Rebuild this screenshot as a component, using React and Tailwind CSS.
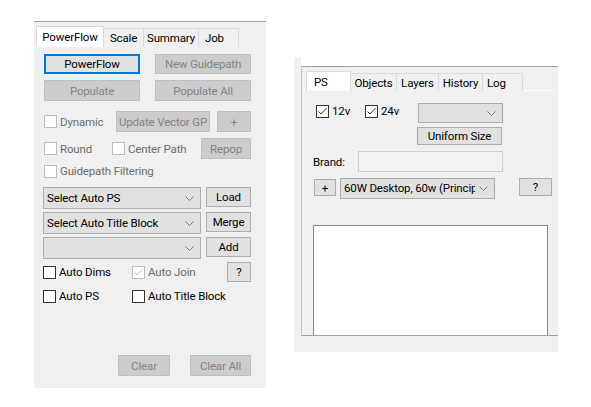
import React from "react";

function Btn({ children, className = "", disabled, primary }) {
  const look = disabled
    ? "bg-[#cccccc] border border-[#bfbfbf] text-[#838383]"
    : primary
    ? "bg-[#e1e1e1] border-2 border-[#0078d7] text-black"
    : "bg-[#e1e1e1] border border-[#adadad] text-black";
  return (
    <button className={`flex items-center justify-center shrink-0 text-[11.5px] tracking-[-0.15px] leading-[14px] whitespace-nowrap ${look} ${className}`}>
      {children}
    </button>
  );
}

function Check({ label, checked, disabled, className = "" }) {
  const edge = disabled ? "border-[#bcbcbc]" : "border-[#333333]";
  const stroke = disabled ? "#bcbcbc" : "#333333";
  return (
    <div className={`flex items-center shrink-0 ${className}`}>
      <div className={`w-[13px] h-[13px] border bg-white flex items-center justify-center ${edge}`}>
        {checked && (
          <svg width="11" height="11" viewBox="0 0 11 11">
            <polyline points="1.5,5.5 4,8 9.5,2" fill="none" stroke={stroke} strokeWidth="1" />
          </svg>
        )}
      </div>
      <span className={`ml-[3px] text-[11.5px] tracking-[-0.15px] leading-[14px] whitespace-nowrap ${disabled ? "text-[#6d6d6d]" : "text-black"}`}>{label}</span>
    </div>
  );
}

function Combo({ text, className = "" }) {
  return (
    <div className={`flex items-center shrink-0 bg-[#e1e1e1] border border-[#adadad] pl-[3px] pr-[6px] overflow-hidden ${className}`}>
      <span className="flex-1 min-w-0 text-[11.5px] tracking-[-0.15px] leading-[15px] text-black whitespace-nowrap overflow-hidden">{text}</span>
      <svg width="9" height="5" viewBox="0 0 9 5" className="shrink-0 ml-[4px]">
        <polyline points="0.5,0.5 4.5,4.5 8.5,0.5" fill="none" stroke="#7a7a7a" strokeWidth="1" />
      </svg>
    </div>
  );
}

function Tab({ label, active, className = "" }) {
  return active ? (
    <div className={`flex items-center justify-center bg-white border border-b-0 border-[#d9d9d9] text-[11.5px] tracking-[-0.15px] leading-[14px] text-black whitespace-nowrap ${className}`}>
      {label}
    </div>
  ) : (
    <div className={`flex items-center justify-center bg-[#f0f0f0] border-t border-r border-[#d9d9d9] text-[11.5px] tracking-[-0.15px] leading-[14px] text-black whitespace-nowrap ${className}`}>
      {label}
    </div>
  );
}

function LeftPanel() {
  return (
    <div className="w-[232px] h-[367px] bg-[#f0f0f0] border-t border-[#a0a0a0] flex flex-col shrink-0">
      <div className="flex items-end h-[25px] pl-[2px]">
        <Tab label="PowerFlow" active className="w-[68px] h-[21px]" />
        <Tab label="Scale" className="w-[40px] h-[19px]" />
        <Tab label="Summary" className="w-[55px] h-[19px]" />
        <Tab label="Job" className="w-[40px] h-[19px] justify-start pl-[6px]" />
      </div>

      <div className="flex mt-[7px] ml-[10px] gap-[15px]">
        <Btn primary className="w-[96px] h-[20px]">PowerFlow</Btn>
        <Btn disabled className="w-[96px] h-[20px]">New Guidepath</Btn>
      </div>
      <div className="flex mt-[6px] ml-[10px] gap-[15px]">
        <Btn disabled className="w-[96px] h-[21px]">Populate</Btn>
        <Btn disabled className="w-[96px] h-[21px]">Populate All</Btn>
      </div>

      <div className="flex items-center mt-[10px] ml-[10px] h-[21px]">
        <Check label="Dynamic" disabled className="w-[72px]" />
        <Btn disabled className="w-[94px] h-[21px]">Update Vector GP</Btn>
        <Btn disabled className="w-[34px] h-[21px] ml-[7px]">+</Btn>
      </div>
      <div className="flex items-center mt-[6px] ml-[10px] h-[21px]">
        <Check label="Round" disabled className="w-[68px]" />
        <Check label="Center Path" disabled className="w-[89px]" />
        <Btn disabled className="w-[50px] h-[21px]">Repop</Btn>
      </div>
      <div className="flex items-center mt-[2px] ml-[10px] h-[20px]">
        <Check label="Guidepath Filtering" disabled />
      </div>

      <div className="flex items-start mt-[6px] ml-[9px] gap-[5px]">
        <Combo text="Select Auto PS" className="w-[158px] h-[22px]" />
        <Btn className="w-[45px] h-[20px]">Load</Btn>
      </div>
      <div className="flex items-start mt-[3px] ml-[9px] gap-[5px]">
        <Combo text="Select Auto Title Block" className="w-[158px] h-[22px]" />
        <Btn className="w-[45px] h-[20px]">Merge</Btn>
      </div>
      <div className="flex items-start mt-[3px] ml-[9px] gap-[5px]">
        <Combo text="" className="w-[158px] h-[22px]" />
        <Btn className="w-[45px] h-[20px]">Add</Btn>
      </div>

      <div className="flex items-center mt-[3px] ml-[9px] h-[20px]">
        <Check label="Auto Dims" className="w-[89px]" />
        <Check label="Auto Join" checked disabled className="w-[95px]" />
        <Btn className="w-[24px] h-[20px]">?</Btn>
      </div>
      <div className="flex items-center mt-[4px] ml-[9px] h-[20px]">
        <Check label="Auto PS" className="w-[89px]" />
        <Check label="Auto Title Block" />
      </div>

      <div className="flex mt-[49px] ml-[84px] gap-[20px]">
        <Btn disabled className="w-[52px] h-[21px]">Clear</Btn>
        <Btn disabled className="w-[61px] h-[21px]">Clear All</Btn>
      </div>
    </div>
  );
}

function RightPanel() {
  return (
    <div className="w-[264px] flex flex-col shrink-0 mt-[36px] ml-[28px]">
      <div className="flex h-[279px]">
        <div className="w-[7px] bg-[#f0f0f0]" />
        <div className="w-[1px] bg-[#c4c4c4] mt-[9px]" />
        <div className="flex-1 flex flex-col">
          <div className="h-[9px] bg-white" />
          <div className="h-[270px] bg-[#f0f0f0] border-t border-b border-[#a0a0a0] overflow-hidden flex flex-col">
            <div className="flex items-end h-[25px] mt-[4px] ml-[4px] mr-[5px]">
              <Tab label="PS" active className="w-[45px] h-[20px] justify-start pl-[7px]" />
              <Tab label="Objects" className="w-[46px] h-[18px]" />
              <Tab label="Layers" className="w-[42px] h-[18px]" />
              <Tab label="History" className="w-[44px] h-[18px]" />
              <Tab label="Log" className="w-[40px] h-[18px] justify-start pl-[4px]" />
              <div className="flex-1 h-[1px] bg-white" />
            </div>

            <div className="flex items-start mt-[12px] ml-[14px]">
              <Check label="12v" checked className="w-[49px] mt-[1px]" />
              <Check label="24v" checked className="w-[53px] mt-[1px]" />
              <Combo text="" className="w-[85px] h-[20px]" />
            </div>
            <div className="flex mt-[4px] ml-[115px]">
              <Btn className="w-[85px] h-[18px]">Uniform Size</Btn>
            </div>
            <div className="flex items-center mt-[6px] ml-[11px]">
              <span className="w-[45px] text-[11.5px] tracking-[-0.15px] leading-[14px] text-black">Brand:</span>
              <div className="w-[145px] h-[21px] bg-[#f2f2f2] border border-[#cccccc]" />
            </div>
            <div className="flex items-start mt-[6px] ml-[12px]">
              <Btn className="w-[22px] h-[17px] mt-[1px]">+</Btn>
              <Combo text="60W Desktop, 60w (Principal)" className="w-[155px] h-[21px] ml-[4px]" />
              <Btn className="w-[33px] h-[18px] ml-[24px]">?</Btn>
            </div>
            <div className="mt-[26px] ml-[11px] w-[235px] h-[130px] shrink-0 bg-white border border-[#828790]" />
          </div>
        </div>
      </div>
      <div className="h-[16px] bg-[#f0f0f0]" />
    </div>
  );
}

export default function App() {
  return (
    <div className="w-[591px] h-[407px] bg-white flex items-start pl-[34px] pt-[21px] font-['Roboto','Noto_Sans',sans-serif] overflow-hidden">
      <LeftPanel />
      <RightPanel />
    </div>
  );
}
